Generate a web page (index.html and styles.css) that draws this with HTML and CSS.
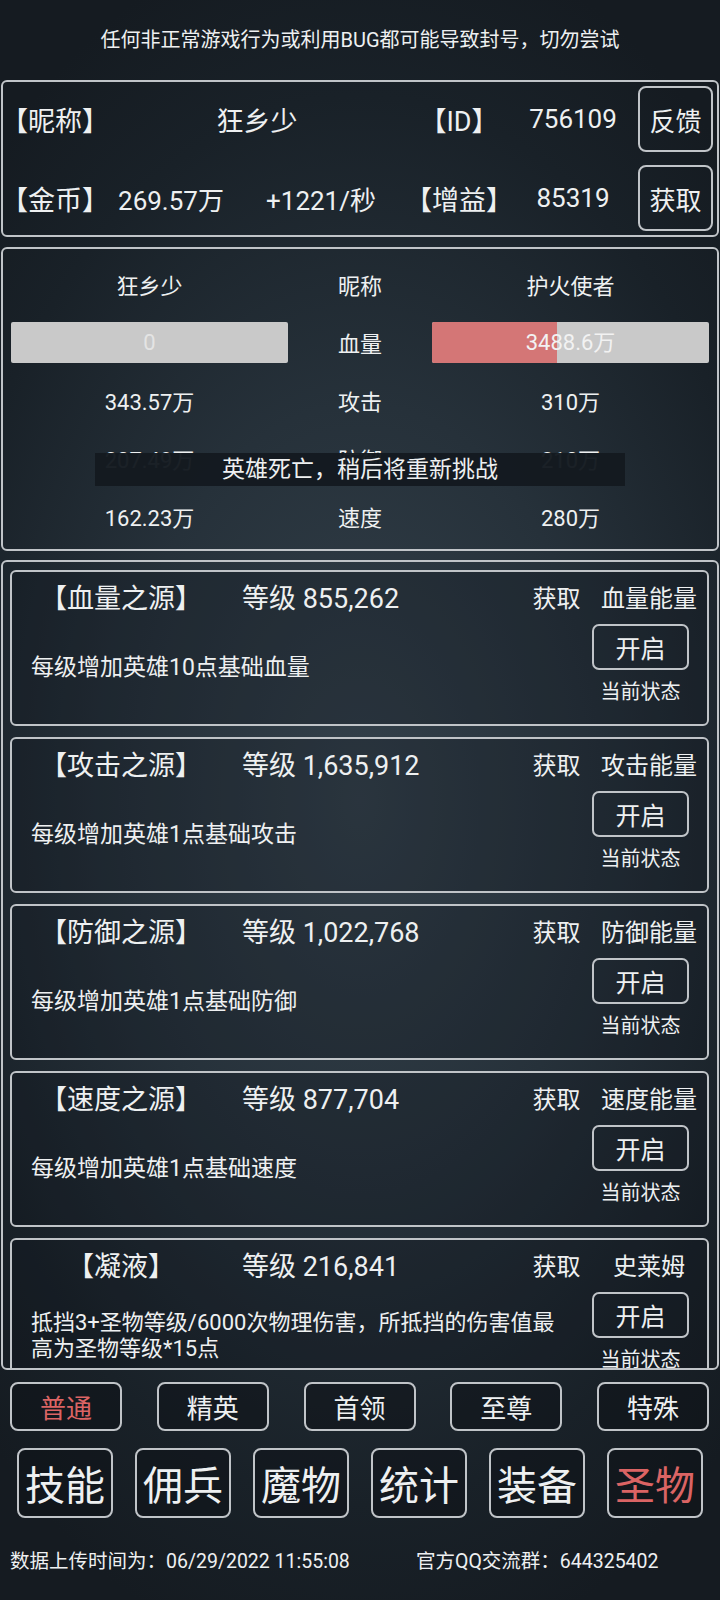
FILE: index.html
```html
<!DOCTYPE html>
<html>
    <head>
        <meta charset="utf-8" />
        <title>圣物</title>
        <meta name="viewport" content="width=720,user-scalable=no" />
        <link rel="stylesheet" href="styles.css">
    </head>

    <body>
        <div class="notice">任何非正常游戏行为或利用BUG都可能导致封号，切勿尝试</div>

        <!-- 玩家信息 -->
        <div class="m-info">
            <span class="lbl">【昵称】</span>
            <span class="name">狂乡少</span>
            <span class="lbl">【ID】</span>
            <span>756109</span>
            <a class="btn">反馈</a>

            <span class="lbl">【金币】</span>
            <span>269.57万</span>
            <span>+1221/秒</span>
            <span class="lbl">【增益】</span>
            <span>85319</span>
            <a class="btn">获取</a>
        </div>

        <!-- 战斗 -->
        <div class="m-battle">
            <div class="row">
                <span>狂乡少</span><span>昵称</span><span>护火使者</span>
            </div>
            <div class="row">
                <div class="bar"><i style="width:0%"></i><b class="dim">0</b></div>
                <span>血量</span>
                <div class="bar"><i style="width:45%"></i><b>3488.6万</b></div>
            </div>
            <div class="row">
                <span>343.57万</span><span>攻击</span><span>310万</span>
            </div>
            <div class="row">
                <span>207.49万</span><span>防御</span><span>210万</span>
            </div>
            <div class="row">
                <span>162.23万</span><span>速度</span><span>280万</span>
            </div>
            <div class="toast">英雄死亡，稍后将重新挑战</div>
        </div>

        <!-- 圣物列表 -->
        <div class="m-relics">
            <div class="card">
                <div class="hd">
                    <span class="tit">【血量之源】</span>
                    <span class="lv">等级 855,262</span>
                    <span class="get">获取</span>
                    <span class="src">血量能量</span>
                </div>
                <div class="bd">
                    <p>每级增加英雄10点基础血量</p>
                    <div class="op"><a class="btn-s">开启</a><em>当前状态</em></div>
                </div>
            </div>
            <div class="card">
                <div class="hd">
                    <span class="tit">【攻击之源】</span>
                    <span class="lv">等级 1,635,912</span>
                    <span class="get">获取</span>
                    <span class="src">攻击能量</span>
                </div>
                <div class="bd">
                    <p>每级增加英雄1点基础攻击</p>
                    <div class="op"><a class="btn-s">开启</a><em>当前状态</em></div>
                </div>
            </div>
            <div class="card">
                <div class="hd">
                    <span class="tit">【防御之源】</span>
                    <span class="lv">等级 1,022,768</span>
                    <span class="get">获取</span>
                    <span class="src">防御能量</span>
                </div>
                <div class="bd">
                    <p>每级增加英雄1点基础防御</p>
                    <div class="op"><a class="btn-s">开启</a><em>当前状态</em></div>
                </div>
            </div>
            <div class="card">
                <div class="hd">
                    <span class="tit">【速度之源】</span>
                    <span class="lv">等级 877,704</span>
                    <span class="get">获取</span>
                    <span class="src">速度能量</span>
                </div>
                <div class="bd">
                    <p>每级增加英雄1点基础速度</p>
                    <div class="op"><a class="btn-s">开启</a><em>当前状态</em></div>
                </div>
            </div>
            <div class="card">
                <div class="hd">
                    <span class="tit">【凝液】</span>
                    <span class="lv">等级 216,841</span>
                    <span class="get">获取</span>
                    <span class="src">史莱姆</span>
                </div>
                <div class="bd">
                    <p class="long">抵挡3+圣物等级/6000次物理伤害，所抵挡的伤害值最高为圣物等级*15点</p>
                    <div class="op"><a class="btn-s">开启</a><em>当前状态</em></div>
                </div>
            </div>
        </div>

        <!-- 难度 -->
        <div class="m-levels">
            <a class="curr">普通</a>
            <a>精英</a>
            <a>首领</a>
            <a>至尊</a>
            <a>特殊</a>
        </div>

        <!-- 菜单 -->
        <div class="m-menu">
            <a>技能</a>
            <a>佣兵</a>
            <a>魔物</a>
            <a>统计</a>
            <a>装备</a>
            <a class="curr">圣物</a>
        </div>

        <div class="foot">
            <span>数据上传时间为：06/29/2022 11:55:08</span>
            <span>官方QQ交流群：644325402</span>
        </div>
    </body>
</html>
```

FILE: styles.css
```css
*{margin:0;padding:0;box-sizing:border-box;}
a{text-decoration:none;color:inherit;}
em{font-style:normal;}

html,body{height:1600px;}
body{
    font-family:Roboto,"Noto Sans CJK SC",sans-serif;
    color:#eef0f1;
    background:#182027 radial-gradient(ellipse 75% 55% at 50% 50%,#34414b 0%,#26313a 45%,#192128 80%,#151b21 100%);
    overflow:hidden;
}

.notice{height:80px;line-height:80px;text-align:center;font-size:20px;}

/* 玩家信息 */
.m-info{
    margin:0 1px;height:157px;padding:4px 4px 3px;
    border:2px solid #c0c4c8;border-radius:6px;
    display:grid;grid-template-columns:100px 128px 172px 110px 112px 1fr;
    grid-template-rows:66px 66px;row-gap:13px;align-items:center;
    font-size:26px;text-align:center;
}
.m-info .lbl{font-size:27px;margin-left:-6px;}
.m-info .name{grid-column:span 2;font-size:27px;}
.m-info .btn{
    justify-self:end;width:75px;height:100%;
    border:2px solid #c0c4c8;border-radius:8px;
    display:flex;align-items:center;justify-content:center;
}

/* 战斗 */
.m-battle{
    position:relative;margin:10px 1px 0;height:304px;padding:6px 8px 4px;
    border:2px solid #c0c4c8;border-radius:6px;font-size:22px;
}
.m-battle .row{display:grid;grid-template-columns:277px 1fr 277px;height:58px;align-items:center;text-align:center;}
.m-battle .bar{position:relative;height:41px;background:#c9c9c9;border-radius:2px;overflow:hidden;}
.m-battle .bar i{position:absolute;left:0;top:0;bottom:0;background:#d47676;}
.m-battle .bar b{position:relative;font-weight:normal;line-height:41px;color:#f2f2f2;}
.m-battle .bar b.dim{color:#e4e4e4;}
.m-battle .toast{
    position:absolute;z-index:2;left:92px;top:204px;width:530px;height:33px;
    line-height:33px;text-align:center;font-size:23px;
    background:rgba(20,26,32,.97);
}

/* 圣物列表 */
.m-relics{
    margin:9px 1px 0;height:810px;padding:8px 8px 0 7px;overflow:hidden;
    border:2px solid #c0c4c8;border-radius:6px;
}
.card{
    height:156px;margin-bottom:11px;
    border:2px solid #c0c4c8;border-radius:6px;background:rgba(12,17,22,.25);
}
.card .hd{display:grid;grid-template-columns:218px 1fr 87px 98px;height:48px;padding-right:9px;align-items:center;font-size:24px;}
.card .tit{text-align:center;font-size:27px;}
.card .lv{padding-left:12px;font-size:27px;}
.card .get,.card .src{text-align:center;}
.card .bd{display:flex;align-items:center;padding:4px 18px 0 19px;}
.card .bd p{flex:1;padding-top:6px;padding-right:20px;font-size:23px;line-height:26px;}
.card .bd p.long{font-size:22px;}
.card .op{width:97px;display:flex;flex-direction:column;align-items:center;}
.btn-s{
    width:97px;height:46px;border:2px solid #c0c4c8;border-radius:7px;
    display:flex;align-items:center;justify-content:center;font-size:25px;
}
.card .op em{margin-top:9px;font-size:20px;line-height:26px;}

/* 难度 */
.m-levels{display:flex;justify-content:space-between;margin-top:12px;padding:0 11px 0 10px;}
.m-levels a{
    width:112px;height:49px;border:2px solid #c0c4c8;border-radius:8px;
    background:rgba(14,19,24,.55);
    display:flex;align-items:center;justify-content:center;font-size:26px;
}
.m-levels .curr,.m-menu .curr{color:#db6464;}

/* 菜单 */
.m-menu{display:flex;justify-content:space-between;margin-top:17px;padding:0 17px;}
.m-menu a{
    width:96px;height:70px;border:2px solid #c0c4c8;border-radius:8px;
    background:rgba(14,19,24,.55);
    display:flex;align-items:center;justify-content:center;font-size:40px;
}

.foot{display:flex;margin-top:28px;padding-left:10px;height:26px;align-items:center;font-size:19.5px;}
.foot span:first-child{width:406px;}
```
